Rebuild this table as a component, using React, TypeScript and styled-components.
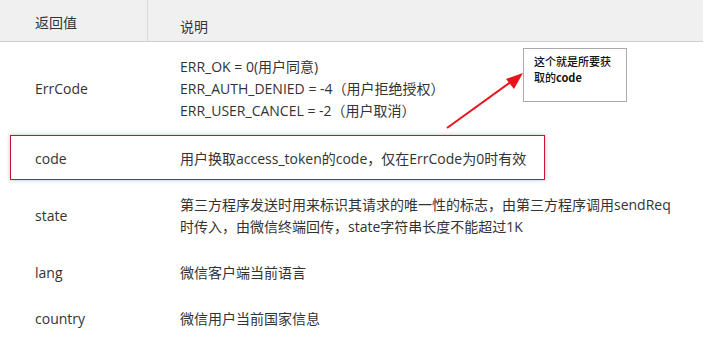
import React from 'react';
import styled, { createGlobalStyle } from 'styled-components';

interface Param {
  name: string;
  lines: string[];
  pad: number;
}

const params: Param[] = [
  {
    name: 'ErrCode',
    lines: ['ERR_OK = 0(用户同意)', 'ERR_AUTH_DENIED = -4（用户拒绝授权）', 'ERR_USER_CANCEL = -2（用户取消）'],
    pad: 14,
  },
  { name: 'code', lines: ['用户换取access_token的code，仅在ErrCode为0时有效'], pad: 12 },
  {
    name: 'state',
    lines: ['第三方程序发送时用来标识其请求的唯一性的标志，由第三方程序调用sendReq', '时传入，由微信终端回传，state字符串长度不能超过1K'],
    pad: 12,
  },
  { name: 'lang', lines: ['微信客户端当前语言'], pad: 12 },
  { name: 'country', lines: ['微信用户当前国家信息'], pad: 12 },
];

const App: React.FC = () => {
  return (
    <>
      <GlobalStyle />
      <Page>
        <Table>
          <HeaderRow>
            <HeadCell $top={12} $divider>返回值</HeadCell>
            <HeadCell $top={16}>说明</HeadCell>
          </HeaderRow>
          {params.map(p => (
            <Row key={p.name} $pad={p.pad}>
              <Label>{p.name}</Label>
              <Desc>
                {p.lines.map(line => (
                  <Line key={line}>{line}</Line>
                ))}
              </Desc>
            </Row>
          ))}
        </Table>

        <Highlight />
        <Arrow width="705" height="340" viewBox="0 0 705 340">
          <line x1="447" y1="128" x2="512" y2="81" stroke="#e8141c" strokeWidth="2" />
          <polygon points="523,73 506,79 514,89" fill="#e8141c" />
        </Arrow>
        <Note>
          这个就是所要获
          <br />
          取的<b>code</b>
        </Note>
      </Page>
    </>
  );
};

export default App;

// Styled components

const GlobalStyle = createGlobalStyle`
  body {
    margin: 0;
    background: #fff;
    font-family: "Open Sans", "Noto Sans CJK SC", sans-serif;
  }
`;

const Page = styled.div`
  position: relative;
  width: 705px;
  height: 340px;
  overflow: hidden;
  color: #333;
`;

const Table = styled.div`
  width: 703px;
  font-size: 14px;
  line-height: 22px;
`;

const HeaderRow = styled.div`
  display: grid;
  grid-template-columns: 148px 1fr;
  height: 41px;
  background: #f0f0f0;
  border-bottom: 1px solid #cfcfcf;
`;

const HeadCell = styled.div<{ $top: number; $divider?: boolean }>`
  padding: ${p => p.$top}px 0 0 ${p => (p.$divider ? 35 : 32)}px;
  border-right: ${p => (p.$divider ? '1px solid #d8d8d8' : 'none')};
`;

const Row = styled.div<{ $pad: number }>`
  display: grid;
  grid-template-columns: 148px 1fr;
  align-items: center;
  padding: ${p => p.$pad}px 0;
`;

const Label = styled.div`
  padding-left: 35px;
`;

const Desc = styled.div`
  padding-left: 32px;
`;

const Line = styled.div`
  white-space: nowrap;
`;

const Highlight = styled.div`
  position: absolute;
  left: 10px;
  top: 135px;
  width: 533px;
  height: 43px;
  border: 1px solid #c8142c;
  box-shadow: 0 0 4px rgba(0, 0, 0, 0.25);
`;

const Arrow = styled.svg`
  position: absolute;
  left: 0;
  top: 0;
  pointer-events: none;
`;

const Note = styled.div`
  position: absolute;
  left: 523px;
  top: 48px;
  width: 92px;
  height: 46px;
  padding: 4px 0 2px 10px;
  background: #fff;
  border: 1px solid #aaa;
  font-family: "Noto Sans CJK SC", sans-serif;
  font-size: 11px;
  font-weight: 500;
  line-height: 16px;
  color: #111;

  b {
    font-weight: 700;
  }
`;
